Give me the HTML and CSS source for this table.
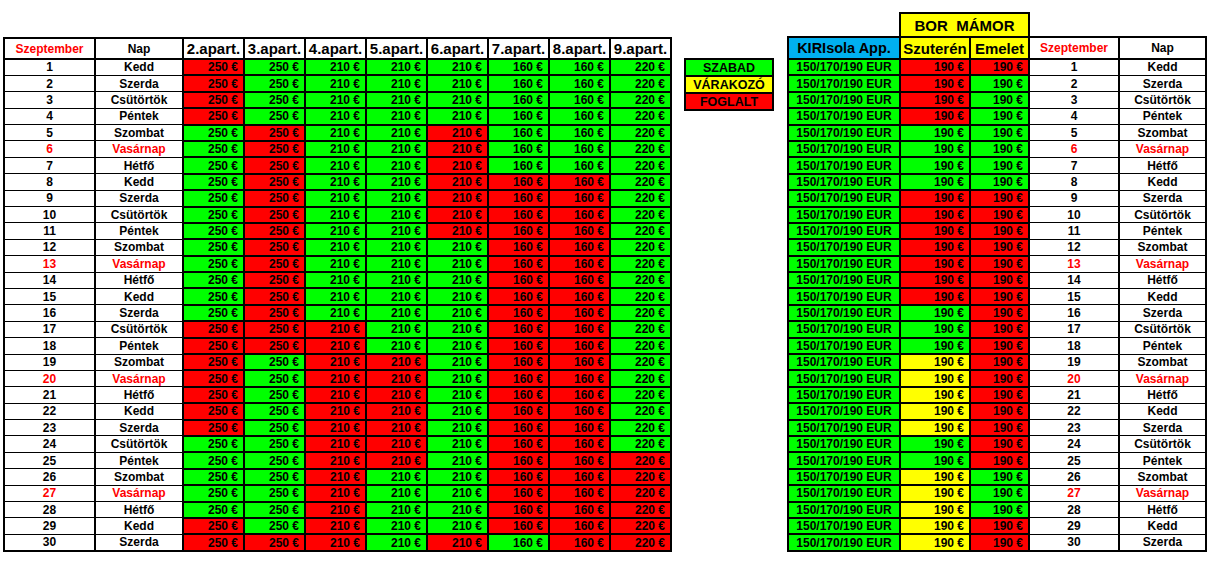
FILE: index.html
```html
<!DOCTYPE html>
<html lang="hu">
<head>
<meta charset="utf-8">
<title>Szeptember foglaltság</title>
<link rel="stylesheet" href="styles.css">
</head>
<body>
<div class="page">
<table class="cal">
<thead>
<tr><th class="hd w-day su">Szeptember</th><th class="hd w-name">Nap</th><th class="ap">2.apart.</th><th class="ap">3.apart.</th><th class="ap">4.apart.</th><th class="ap">5.apart.</th><th class="ap">6.apart.</th><th class="ap">7.apart.</th><th class="ap">8.apart.</th><th class="ap">9.apart.</th></tr>
</thead>
<tbody>
<tr><td class="d">1</td><td class="n">Kedd</td><td class="r">250 €</td><td class="g">250 €</td><td class="g">210 €</td><td class="g">210 €</td><td class="g">210 €</td><td class="g">160 €</td><td class="g">160 €</td><td class="g">220 €</td></tr>
<tr><td class="d">2</td><td class="n">Szerda</td><td class="r">250 €</td><td class="g">250 €</td><td class="g">210 €</td><td class="g">210 €</td><td class="g">210 €</td><td class="g">160 €</td><td class="g">160 €</td><td class="g">220 €</td></tr>
<tr><td class="d">3</td><td class="n">Csütörtök</td><td class="r">250 €</td><td class="g">250 €</td><td class="g">210 €</td><td class="g">210 €</td><td class="g">210 €</td><td class="g">160 €</td><td class="g">160 €</td><td class="g">220 €</td></tr>
<tr><td class="d">4</td><td class="n">Péntek</td><td class="r">250 €</td><td class="g">250 €</td><td class="g">210 €</td><td class="g">210 €</td><td class="g">210 €</td><td class="g">160 €</td><td class="g">160 €</td><td class="g">220 €</td></tr>
<tr><td class="d">5</td><td class="n">Szombat</td><td class="g">250 €</td><td class="r">250 €</td><td class="g">210 €</td><td class="g">210 €</td><td class="r">210 €</td><td class="g">160 €</td><td class="g">160 €</td><td class="g">220 €</td></tr>
<tr><td class="d su">6</td><td class="n su">Vasárnap</td><td class="g">250 €</td><td class="r">250 €</td><td class="g">210 €</td><td class="g">210 €</td><td class="r">210 €</td><td class="g">160 €</td><td class="g">160 €</td><td class="g">220 €</td></tr>
<tr><td class="d">7</td><td class="n">Hétfő</td><td class="g">250 €</td><td class="r">250 €</td><td class="g">210 €</td><td class="g">210 €</td><td class="r">210 €</td><td class="g">160 €</td><td class="g">160 €</td><td class="g">220 €</td></tr>
<tr><td class="d">8</td><td class="n">Kedd</td><td class="g">250 €</td><td class="r">250 €</td><td class="g">210 €</td><td class="g">210 €</td><td class="r">210 €</td><td class="r">160 €</td><td class="r">160 €</td><td class="g">220 €</td></tr>
<tr><td class="d">9</td><td class="n">Szerda</td><td class="g">250 €</td><td class="r">250 €</td><td class="g">210 €</td><td class="g">210 €</td><td class="r">210 €</td><td class="r">160 €</td><td class="r">160 €</td><td class="g">220 €</td></tr>
<tr><td class="d">10</td><td class="n">Csütörtök</td><td class="g">250 €</td><td class="r">250 €</td><td class="g">210 €</td><td class="g">210 €</td><td class="r">210 €</td><td class="r">160 €</td><td class="r">160 €</td><td class="g">220 €</td></tr>
<tr><td class="d">11</td><td class="n">Péntek</td><td class="g">250 €</td><td class="r">250 €</td><td class="g">210 €</td><td class="g">210 €</td><td class="r">210 €</td><td class="r">160 €</td><td class="r">160 €</td><td class="g">220 €</td></tr>
<tr><td class="d">12</td><td class="n">Szombat</td><td class="g">250 €</td><td class="r">250 €</td><td class="g">210 €</td><td class="g">210 €</td><td class="g">210 €</td><td class="r">160 €</td><td class="r">160 €</td><td class="g">220 €</td></tr>
<tr><td class="d su">13</td><td class="n su">Vasárnap</td><td class="g">250 €</td><td class="r">250 €</td><td class="g">210 €</td><td class="g">210 €</td><td class="g">210 €</td><td class="r">160 €</td><td class="r">160 €</td><td class="g">220 €</td></tr>
<tr><td class="d">14</td><td class="n">Hétfő</td><td class="g">250 €</td><td class="r">250 €</td><td class="g">210 €</td><td class="g">210 €</td><td class="g">210 €</td><td class="r">160 €</td><td class="r">160 €</td><td class="g">220 €</td></tr>
<tr><td class="d">15</td><td class="n">Kedd</td><td class="g">250 €</td><td class="r">250 €</td><td class="g">210 €</td><td class="g">210 €</td><td class="g">210 €</td><td class="r">160 €</td><td class="r">160 €</td><td class="g">220 €</td></tr>
<tr><td class="d">16</td><td class="n">Szerda</td><td class="g">250 €</td><td class="r">250 €</td><td class="g">210 €</td><td class="g">210 €</td><td class="g">210 €</td><td class="r">160 €</td><td class="r">160 €</td><td class="g">220 €</td></tr>
<tr><td class="d">17</td><td class="n">Csütörtök</td><td class="r">250 €</td><td class="r">250 €</td><td class="r">210 €</td><td class="g">210 €</td><td class="g">210 €</td><td class="r">160 €</td><td class="r">160 €</td><td class="g">220 €</td></tr>
<tr><td class="d">18</td><td class="n">Péntek</td><td class="r">250 €</td><td class="r">250 €</td><td class="r">210 €</td><td class="g">210 €</td><td class="g">210 €</td><td class="r">160 €</td><td class="r">160 €</td><td class="g">220 €</td></tr>
<tr><td class="d">19</td><td class="n">Szombat</td><td class="r">250 €</td><td class="g">250 €</td><td class="r">210 €</td><td class="r">210 €</td><td class="g">210 €</td><td class="r">160 €</td><td class="r">160 €</td><td class="g">220 €</td></tr>
<tr><td class="d su">20</td><td class="n su">Vasárnap</td><td class="r">250 €</td><td class="g">250 €</td><td class="r">210 €</td><td class="r">210 €</td><td class="g">210 €</td><td class="r">160 €</td><td class="r">160 €</td><td class="g">220 €</td></tr>
<tr><td class="d">21</td><td class="n">Hétfő</td><td class="r">250 €</td><td class="g">250 €</td><td class="r">210 €</td><td class="r">210 €</td><td class="g">210 €</td><td class="r">160 €</td><td class="r">160 €</td><td class="g">220 €</td></tr>
<tr><td class="d">22</td><td class="n">Kedd</td><td class="r">250 €</td><td class="g">250 €</td><td class="r">210 €</td><td class="r">210 €</td><td class="g">210 €</td><td class="r">160 €</td><td class="r">160 €</td><td class="g">220 €</td></tr>
<tr><td class="d">23</td><td class="n">Szerda</td><td class="r">250 €</td><td class="g">250 €</td><td class="r">210 €</td><td class="r">210 €</td><td class="g">210 €</td><td class="r">160 €</td><td class="r">160 €</td><td class="g">220 €</td></tr>
<tr><td class="d">24</td><td class="n">Csütörtök</td><td class="g">250 €</td><td class="g">250 €</td><td class="r">210 €</td><td class="r">210 €</td><td class="g">210 €</td><td class="r">160 €</td><td class="r">160 €</td><td class="g">220 €</td></tr>
<tr><td class="d">25</td><td class="n">Péntek</td><td class="g">250 €</td><td class="g">250 €</td><td class="r">210 €</td><td class="r">210 €</td><td class="g">210 €</td><td class="r">160 €</td><td class="r">160 €</td><td class="r">220 €</td></tr>
<tr><td class="d">26</td><td class="n">Szombat</td><td class="g">250 €</td><td class="g">250 €</td><td class="r">210 €</td><td class="g">210 €</td><td class="g">210 €</td><td class="r">160 €</td><td class="r">160 €</td><td class="r">220 €</td></tr>
<tr><td class="d su">27</td><td class="n su">Vasárnap</td><td class="g">250 €</td><td class="g">250 €</td><td class="r">210 €</td><td class="g">210 €</td><td class="g">210 €</td><td class="r">160 €</td><td class="r">160 €</td><td class="r">220 €</td></tr>
<tr><td class="d">28</td><td class="n">Hétfő</td><td class="g">250 €</td><td class="g">250 €</td><td class="r">210 €</td><td class="g">210 €</td><td class="g">210 €</td><td class="r">160 €</td><td class="r">160 €</td><td class="r">220 €</td></tr>
<tr><td class="d">29</td><td class="n">Kedd</td><td class="r">250 €</td><td class="g">250 €</td><td class="r">210 €</td><td class="g">210 €</td><td class="g">210 €</td><td class="r">160 €</td><td class="r">160 €</td><td class="r">220 €</td></tr>
<tr><td class="d">30</td><td class="n">Szerda</td><td class="r">250 €</td><td class="r">250 €</td><td class="r">210 €</td><td class="g">210 €</td><td class="r">210 €</td><td class="g">160 €</td><td class="r">160 €</td><td class="r">220 €</td></tr>
</tbody>
</table>

<table class="legend">
<tr><td class="g">SZABAD</td></tr>
<tr><td class="y">VÁRAKOZÓ</td></tr>
<tr><td class="r">FOGLALT</td></tr>
</table>

<table class="side">
<thead>
<tr><th class="blank"></th><th class="bor" colspan="2">BOR&nbsp;&nbsp;MÁMOR</th><th class="blank"></th><th class="blank"></th></tr>
<tr><th class="kiri">KIRIsola App.</th><th class="yh w-szu">Szuterén</th><th class="yh w-em">Emelet</th><th class="hd w-day2 su">Szeptember</th><th class="hd w-name2">Nap</th></tr>
</thead>
<tbody>
<tr><td class="eur">150/170/190 EUR</td><td class="r">190 €</td><td class="r">190 €</td><td class="d">1</td><td class="n">Kedd</td></tr>
<tr><td class="eur">150/170/190 EUR</td><td class="r">190 €</td><td class="g">190 €</td><td class="d">2</td><td class="n">Szerda</td></tr>
<tr><td class="eur">150/170/190 EUR</td><td class="r">190 €</td><td class="g">190 €</td><td class="d">3</td><td class="n">Csütörtök</td></tr>
<tr><td class="eur">150/170/190 EUR</td><td class="r">190 €</td><td class="g">190 €</td><td class="d">4</td><td class="n">Péntek</td></tr>
<tr><td class="eur">150/170/190 EUR</td><td class="g">190 €</td><td class="g">190 €</td><td class="d">5</td><td class="n">Szombat</td></tr>
<tr><td class="eur">150/170/190 EUR</td><td class="g">190 €</td><td class="g">190 €</td><td class="d su">6</td><td class="n su">Vasárnap</td></tr>
<tr><td class="eur">150/170/190 EUR</td><td class="g">190 €</td><td class="g">190 €</td><td class="d">7</td><td class="n">Hétfő</td></tr>
<tr><td class="eur">150/170/190 EUR</td><td class="g">190 €</td><td class="g">190 €</td><td class="d">8</td><td class="n">Kedd</td></tr>
<tr><td class="eur">150/170/190 EUR</td><td class="r">190 €</td><td class="r">190 €</td><td class="d">9</td><td class="n">Szerda</td></tr>
<tr><td class="eur">150/170/190 EUR</td><td class="r">190 €</td><td class="r">190 €</td><td class="d">10</td><td class="n">Csütörtök</td></tr>
<tr><td class="eur">150/170/190 EUR</td><td class="r">190 €</td><td class="r">190 €</td><td class="d">11</td><td class="n">Péntek</td></tr>
<tr><td class="eur">150/170/190 EUR</td><td class="r">190 €</td><td class="r">190 €</td><td class="d">12</td><td class="n">Szombat</td></tr>
<tr><td class="eur">150/170/190 EUR</td><td class="r">190 €</td><td class="r">190 €</td><td class="d su">13</td><td class="n su">Vasárnap</td></tr>
<tr><td class="eur">150/170/190 EUR</td><td class="r">190 €</td><td class="r">190 €</td><td class="d">14</td><td class="n">Hétfő</td></tr>
<tr><td class="eur">150/170/190 EUR</td><td class="r">190 €</td><td class="r">190 €</td><td class="d">15</td><td class="n">Kedd</td></tr>
<tr><td class="eur">150/170/190 EUR</td><td class="g">190 €</td><td class="r">190 €</td><td class="d">16</td><td class="n">Szerda</td></tr>
<tr><td class="eur">150/170/190 EUR</td><td class="g">190 €</td><td class="r">190 €</td><td class="d">17</td><td class="n">Csütörtök</td></tr>
<tr><td class="eur">150/170/190 EUR</td><td class="g">190 €</td><td class="r">190 €</td><td class="d">18</td><td class="n">Péntek</td></tr>
<tr><td class="eur">150/170/190 EUR</td><td class="y">190 €</td><td class="r">190 €</td><td class="d">19</td><td class="n">Szombat</td></tr>
<tr><td class="eur">150/170/190 EUR</td><td class="y">190 €</td><td class="r">190 €</td><td class="d su">20</td><td class="n su">Vasárnap</td></tr>
<tr><td class="eur">150/170/190 EUR</td><td class="y">190 €</td><td class="r">190 €</td><td class="d">21</td><td class="n">Hétfő</td></tr>
<tr><td class="eur">150/170/190 EUR</td><td class="y">190 €</td><td class="r">190 €</td><td class="d">22</td><td class="n">Kedd</td></tr>
<tr><td class="eur">150/170/190 EUR</td><td class="y">190 €</td><td class="r">190 €</td><td class="d">23</td><td class="n">Szerda</td></tr>
<tr><td class="eur">150/170/190 EUR</td><td class="g">190 €</td><td class="r">190 €</td><td class="d">24</td><td class="n">Csütörtök</td></tr>
<tr><td class="eur">150/170/190 EUR</td><td class="g">190 €</td><td class="r">190 €</td><td class="d">25</td><td class="n">Péntek</td></tr>
<tr><td class="eur">150/170/190 EUR</td><td class="y">190 €</td><td class="g">190 €</td><td class="d">26</td><td class="n">Szombat</td></tr>
<tr><td class="eur">150/170/190 EUR</td><td class="y">190 €</td><td class="g">190 €</td><td class="d su">27</td><td class="n su">Vasárnap</td></tr>
<tr><td class="eur">150/170/190 EUR</td><td class="y">190 €</td><td class="g">190 €</td><td class="d">28</td><td class="n">Hétfő</td></tr>
<tr><td class="eur">150/170/190 EUR</td><td class="y">190 €</td><td class="r">190 €</td><td class="d">29</td><td class="n">Kedd</td></tr>
<tr><td class="eur">150/170/190 EUR</td><td class="y">190 €</td><td class="r">190 €</td><td class="d">30</td><td class="n">Szerda</td></tr>
</tbody>
</table>
</div>
</body>
</html>
```

FILE: styles.css
```css
html, body {
  margin: 0;
  padding: 0;
  background: #ffffff;
}

.page {
  display: flex;
  align-items: flex-start;
  padding: 12px 0 0 3px;
  font-family: "Liberation Sans", Arial, sans-serif;
  color: #000;
}

table {
  border-collapse: collapse;
  font-family: "Liberation Sans", Arial, sans-serif;
}

th, td {
  padding: 0;
  font-weight: bold;
  font-size: 12px;
  line-height: 14px;
  white-space: nowrap;
}

.cal {
  margin-top: 25px;
  border: 2px solid #000;
}

.cal tbody td,
.side tbody td {
  height: 14.4px;
}

.hd {
  height: 19px;
  background: #fff;
  text-align: center;
  border: 2px solid #000;
}

.su { color: #ff0000; }

.w-day { width: 89px; }
.w-name { width: 86px; }

.ap {
  width: 59px;
  height: 19px;
  font-size: 15px;
  line-height: 17px;
  text-align: center;
  border: 2px solid #000;
  background: #fff;
}

.d, .n {
  text-align: center;
  background: #fff;
  border-left: 2px solid #000;
  border-right: 2px solid #000;
  border-top: 1px solid #000;
  border-bottom: 1px solid #000;
}

.r, .g, .y {
  text-align: right;
  padding-right: 5px;
  border: 2px solid #000;
}

.r { background: #ff0000; }
.g { background: #00ff00; }
.y { background: #ffff00; }

.legend {
  margin-top: 46px;
  margin-left: 12px;
  border: 2px solid #000;
}

.legend td {
  width: 86px;
  height: 15px;
  text-align: center;
  padding-right: 0;
  font-size: 12.5px;
}

.side {
  margin-left: 13px;
}

.side .blank {
  border: none;
  background: transparent;
}

.bor {
  height: 22px;
  background: #ffff00;
  font-size: 15px;
  line-height: 17px;
  text-align: center;
  border: 2px solid #000;
  white-space: pre;
}

.kiri {
  width: 110px;
  height: 20px;
  background: #00b0f0;
  font-size: 14.5px;
  line-height: 17px;
  text-align: center;
  border: 2px solid #000;
}

.yh {
  height: 20px;
  background: #ffff00;
  font-size: 15px;
  line-height: 17px;
  text-align: center;
  border: 2px solid #000;
}

.w-szu { width: 68px; }
.w-em { width: 57px; }
.w-day2 { width: 88px; }
.w-name2 { width: 85px; }

.eur {
  background: #00ff00;
  text-align: center;
  border: 2px solid #000;
}

.side tbody tr:last-child td {
  border-bottom: 2px solid #000;
}
```
